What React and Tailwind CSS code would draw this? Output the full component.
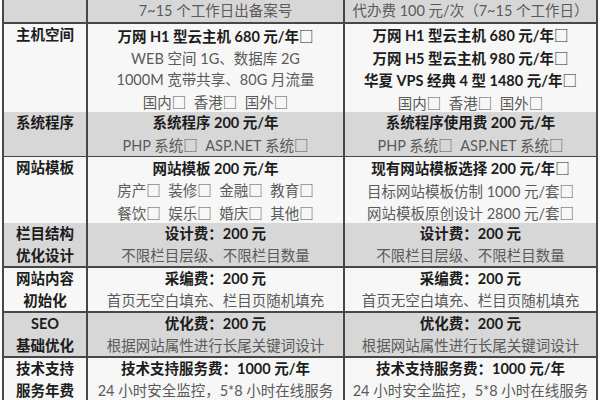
const rows = [
  {
    gray: true,
    h: 'h-[22px]',
    label: [],
    mid: [{ t: '7~15 个工作日出备案号' }],
    right: [{ t: '代办费 100 元/次（7~15 个工作日）' }],
  },
  {
    h: 'h-[86px]',
    label: ['主机空间'],
    mid: [
      { t: '万网 H1 型云主机 680 元/年□', b: true },
      { t: 'WEB 空间 1G、数据库 2G' },
      { t: '1000M 宽带共享、80G 月流量' },
      { t: '国内□  香港□  国外□' },
    ],
    right: [
      { t: '万网 H1 型云主机 680 元/年□', b: true },
      { t: '万网 H5 型云主机 980 元/年□', b: true },
      { t: '华夏 VPS 经典 4 型 1480 元/年□', b: true },
      { t: '国内□  香港□  国外□' },
    ],
  },
  {
    gray: true,
    h: 'h-[43px]',
    label: ['系统程序'],
    mid: [
      { t: '系统程序 200 元/年', b: true },
      { t: 'PHP 系统□  ASP.NET 系统□' },
    ],
    right: [
      { t: '系统程序使用费 200 元/年', b: true },
      { t: 'PHP 系统□  ASP.NET 系统□' },
    ],
  },
  {
    h: 'h-[64px]',
    label: ['网站模板'],
    mid: [
      { t: '网站模板 200 元/年', b: true },
      { t: '房产□  装修□  金融□  教育□' },
      { t: '餐饮□  娱乐□  婚庆□  其他□' },
    ],
    right: [
      { t: '现有网站模板选择 200 元/年□', b: true },
      { t: '目标网站模板仿制 1000 元/套□' },
      { t: '网站模板原创设计 2800 元/套□' },
    ],
  },
  {
    gray: true,
    h: 'h-[43px]',
    label: ['栏目结构', '优化设计'],
    mid: [
      { t: '设计费：200 元', b: true },
      { t: '不限栏目层级、不限栏目数量' },
    ],
    right: [
      { t: '设计费：200 元', b: true },
      { t: '不限栏目层级、不限栏目数量' },
    ],
  },
  {
    h: 'h-[43px]',
    label: ['网站内容', '初始化'],
    mid: [
      { t: '采编费：200 元', b: true },
      { t: '首页无空白填充、栏目页随机填充' },
    ],
    right: [
      { t: '采编费：200 元', b: true },
      { t: '首页无空白填充、栏目页随机填充' },
    ],
  },
  {
    gray: true,
    h: 'h-[43px]',
    label: ['SEO', '基础优化'],
    mid: [
      { t: '优化费：200 元', b: true },
      { t: '根据网站属性进行长尾关键词设计' },
    ],
    right: [
      { t: '优化费：200 元', b: true },
      { t: '根据网站属性进行长尾关键词设计' },
    ],
  },
  {
    h: 'h-[43px]',
    label: ['技术支持', '服务年费'],
    mid: [
      { t: '技术支持服务费：1000 元/年', b: true },
      { t: '24 小时安全监控，5*8 小时在线服务' },
    ],
    right: [
      { t: '技术支持服务费：1000 元/年', b: true },
      { t: '24 小时安全监控，5*8 小时在线服务' },
    ],
  },
]

// the check boxes come out tiny in Lato, so give them the CJK face
function Boxed({ text }) {
  const parts = text.split('□')
  return parts.map((p, i) => (
    <span key={i}>
      {p}
      {i < parts.length - 1 && (
        <span className="font-normal" style={{ fontFamily: '"Noto Sans CJK SC", sans-serif' }}>
          □
        </span>
      )}
    </span>
  ))
}

function Lines({ items }) {
  return (
    <div className="flex flex-col items-center justify-center">
      {items.map((l, i) => (
        <div
          key={i}
          className={`whitespace-pre ${l.b ? 'font-bold text-[#1c1c1c]' : 'text-[#5a5a5a]'}`}
        >
          <Boxed text={l.t} />
        </div>
      ))}
    </div>
  )
}

export default function App() {
  return (
    <div
      className="h-[400px] w-[600px] overflow-hidden bg-white text-[14.5px] leading-[21.5px]"
      style={{ fontFamily: 'Lato, "Noto Sans CJK SC", sans-serif' }}
    >
      <div className="ml-[2px] flex w-[596px] flex-col gap-y-[2px] bg-[#474747] px-[2px]">
        {rows.map((r, i) => {
          const bg = r.gray ? 'bg-[#d7d7d7]' : 'bg-[#f7f7f7]'
          return (
            <div key={i} className={`grid shrink-0 grid-cols-[82px_255px_1fr] gap-x-[2px] ${r.h}`}>
              <div className={`${bg} flex flex-col items-center font-bold text-[#1c1c1c]`}>
                {r.label.map((l) => (
                  <div key={l}>{l}</div>
                ))}
              </div>
              <div className={`${bg} flex items-center justify-center`}>
                <Lines items={r.mid} />
              </div>
              <div className={`${bg} flex items-center justify-center`}>
                <Lines items={r.right} />
              </div>
            </div>
          )
        })}
      </div>
    </div>
  )
}
